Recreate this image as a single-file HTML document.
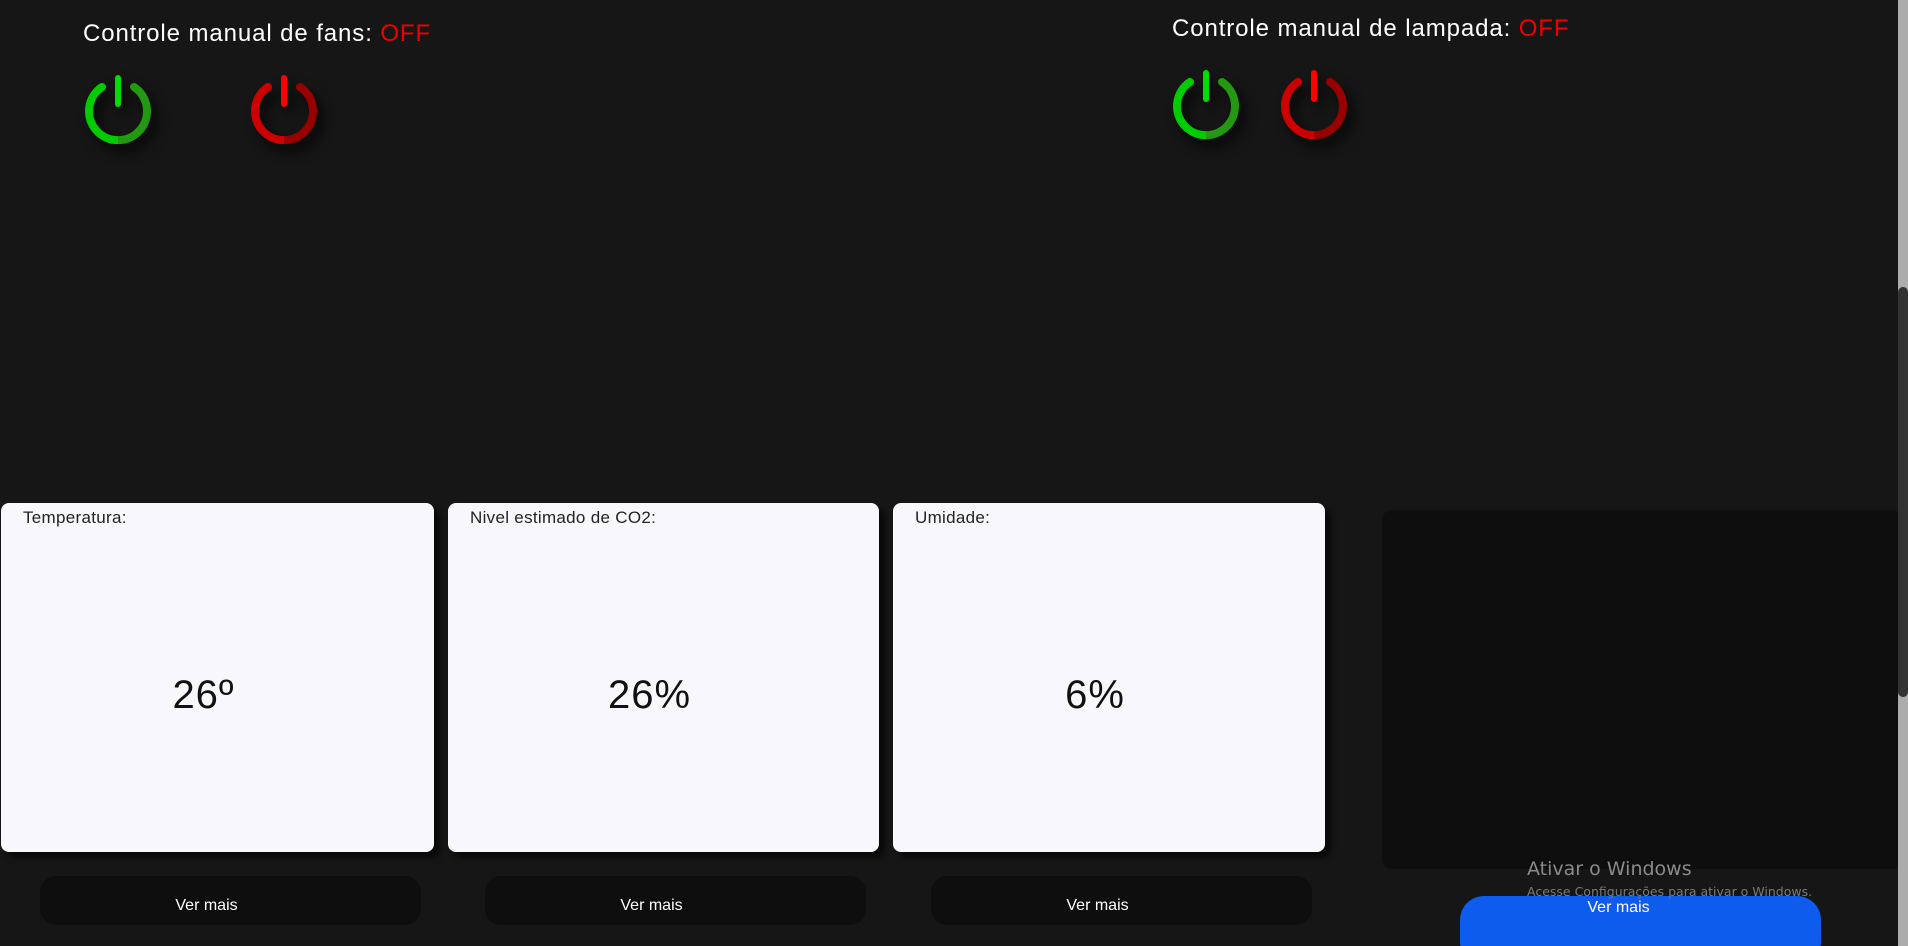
<!DOCTYPE html>
<html style="width:1908px;height:946px;overflow:hidden"><head><meta charset="utf-8"><style>
*{margin:0;padding:0;box-sizing:border-box}
body{width:1908px;height:946px;background:#161616;font-family:"Liberation Sans",sans-serif;position:relative;overflow:hidden;color:#fff}
.t{position:absolute;font-size:24px;letter-spacing:0.9px;color:#fff;white-space:nowrap}
.t span{color:#e00}
.p{position:absolute;width:76px;height:76px;filter:drop-shadow(6px 8px 6px rgba(0,0,0,.8))}
.card{position:absolute;top:503px;height:349px;background:#f8f8fc;border-radius:8px;box-shadow:6px 6px 6px rgba(0,0,0,.6);color:#111}
.card .l{position:absolute;left:22px;top:5px;font-size:17px;color:#222;letter-spacing:0.3px}
.card .v{position:absolute;left:0;right:28px;top:170px;text-align:center;font-size:40px;color:#111;letter-spacing:1px}
.b{position:absolute;top:876px;height:49px;background:#0e0e0e;border-radius:16px;text-align:center;line-height:60px;font-size:16px;color:#fff;padding-right:48px}
</style></head><body>
<div class="t" style="left:83px;top:20px">Controle manual de fans: <span>OFF</span></div>
<div class="t" style="left:1172px;top:15px">Controle manual de lampada: <span>OFF</span></div>

<svg class="p" style="left:80px;top:72px" viewBox="0 0 76 76"><defs><linearGradient id="g" x1="0" x2="1"><stop offset=".5" stop-color="#0c0"/><stop offset=".5" stop-color="#229910"/></linearGradient></defs><path d="M22 15 A29 29 0 1 0 54 15" fill="none" stroke="url(#g)" stroke-width="8" stroke-linecap="round"/><line x1="38" y1="6" x2="38" y2="32" stroke="#0d0" stroke-width="6" stroke-linecap="round"/></svg>
<svg class="p" style="left:246px;top:72px" viewBox="0 0 76 76"><defs><linearGradient id="r" x1="0" x2="1"><stop offset=".5" stop-color="#c00"/><stop offset=".5" stop-color="#990000"/></linearGradient></defs><path d="M22 15 A29 29 0 1 0 54 15" fill="none" stroke="url(#r)" stroke-width="8" stroke-linecap="round"/><line x1="38" y1="6" x2="38" y2="32" stroke="#f00" stroke-width="6" stroke-linecap="round"/></svg>
<svg class="p" style="left:1168px;top:67px" viewBox="0 0 76 76"><path d="M22 15 A29 29 0 1 0 54 15" fill="none" stroke="url(#g)" stroke-width="8" stroke-linecap="round"/><line x1="38" y1="6" x2="38" y2="32" stroke="#0d0" stroke-width="6" stroke-linecap="round"/></svg>
<svg class="p" style="left:1276px;top:67px" viewBox="0 0 76 76"><path d="M22 15 A29 29 0 1 0 54 15" fill="none" stroke="url(#r)" stroke-width="8" stroke-linecap="round"/><line x1="38" y1="6" x2="38" y2="32" stroke="#f00" stroke-width="6" stroke-linecap="round"/></svg>

<div class="card" style="left:1px;width:433px"><div class="l">Temperatura:</div><div class="v">26º</div></div>
<div class="card" style="left:448px;width:431px"><div class="l">Nivel estimado de CO2:</div><div class="v">26%</div></div>
<div class="card" style="left:893px;width:432px"><div class="l">Umidade:</div><div class="v">6%</div></div>

<div class="b" style="left:40px;width:381px">Ver mais</div>
<div class="b" style="left:485px;width:381px">Ver mais</div>
<div class="b" style="left:931px;width:381px">Ver mais</div>

<div style="position:absolute;left:1382px;top:510px;width:520px;height:359px;background:#0e0e0e;border-radius:10px"></div>
<div style="position:absolute;left:1460px;top:896px;width:361px;height:70px;background:#0d5ced;border-radius:24px"></div>
<div style="position:absolute;left:1460px;top:896px;width:361px;text-align:center;font-size:16px;line-height:24px;color:#fff;padding-right:44px">Ver mais</div>
<div style="position:absolute;left:1527px;top:858px;font-size:19px;color:#8a8a8a;font-family:'DejaVu Sans',sans-serif">Ativar o Windows</div>
<div style="position:absolute;left:1527px;top:884px;font-size:12.5px;color:#7a7a7a;font-family:'DejaVu Sans',sans-serif">Acesse Configurações para ativar o Windows.</div>

<div style="position:absolute;left:1898px;top:0;width:10px;height:946px;background:#acacac"></div>
<div style="position:absolute;left:1898px;top:287px;width:10px;height:410px;background:#333;border-radius:5px"></div>
</body></html>
